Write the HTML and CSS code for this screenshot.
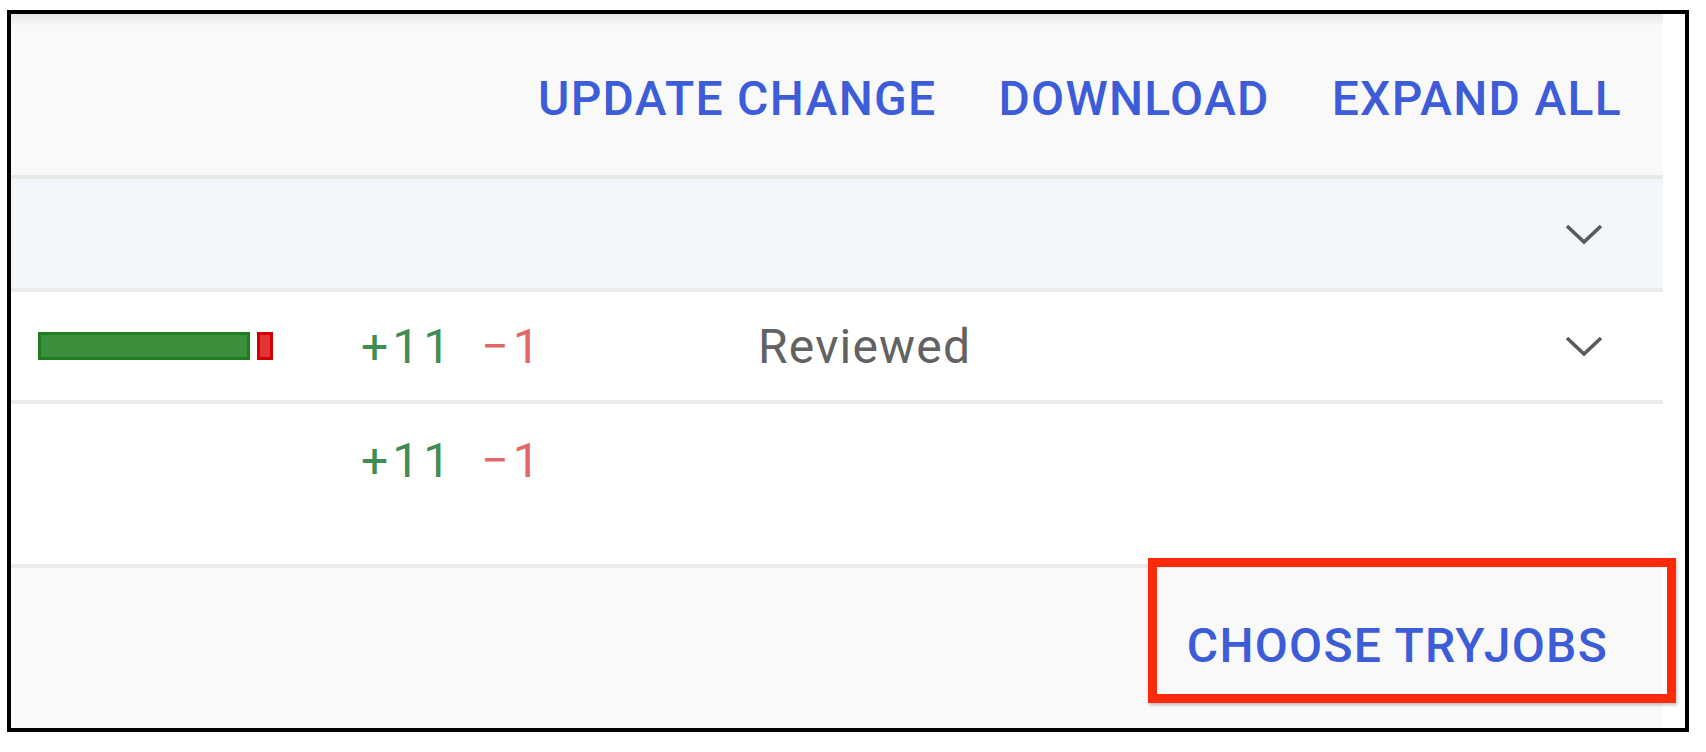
FILE: index.html
```html
<!DOCTYPE html>
<html lang="en">
<head>
<meta charset="utf-8">
<title>File list</title>
<link rel="stylesheet" href="styles.css">
</head>
<body>
<div class="frame">
  <div class="card">
    <div class="header">
      <span class="action">UPDATE CHANGE</span>
      <span class="action">DOWNLOAD</span>
      <span class="action">EXPAND ALL</span>
    </div>
    <div class="row row-selected">
      <div class="cell-bar"></div>
      <div class="cell-stats"></div>
      <div class="cell-status"></div>
      <div class="cell-toggle">
        <svg viewBox="0 0 40 24" width="40" height="24"><polyline points="3,4 20,20 37,4"/></svg>
      </div>
    </div>
    <div class="row row-file">
      <div class="cell-bar"><span class="bar-add"></span><span class="bar-del"></span></div>
      <div class="cell-stats"><span class="added">+11</span><span class="removed">−1</span></div>
      <div class="cell-status">Reviewed</div>
      <div class="cell-toggle">
        <svg viewBox="0 0 40 24" width="40" height="24"><polyline points="3,4 20,20 37,4"/></svg>
      </div>
    </div>
    <div class="row row-total">
      <div class="cell-bar"></div>
      <div class="cell-stats"><span class="added">+11</span><span class="removed">−1</span></div>
    </div>
    <div class="footer">
      <span class="action">CHOOSE TRYJOBS</span>
      <span class="highlight"></span>
    </div>
  </div>
</div>
</body>
</html>
```

FILE: styles.css
```css
* { box-sizing: border-box; }

body {
  margin: 0;
  background: #ffffff;
  font-family: Roboto, "Liberation Sans", sans-serif;
}

.frame {
  margin: 10px 0 0 7px;
  width: 1682px;
  height: 722px;
  border: 4px solid #000;
  display: flex;
  flex-direction: column;
  box-shadow: inset 1px 0 0 #b5b5b5;
}

.card {
  width: 1652px;
  flex: 1;
  display: flex;
  flex-direction: column;
}

.header {
  height: 165px;
  padding: 7px 41px 0 0;
  display: flex;
  justify-content: flex-end;
  align-items: center;
  gap: 62px;
  background: linear-gradient(#e7e7e7, #f9f9f9 12px);
  border-bottom: 4px solid #e8e8e8;
}

.action {
  font-size: 48px;
  font-weight: 500;
  letter-spacing: 1.3px;
  color: #3d5cd8;
  white-space: nowrap;
}

.row {
  display: flex;
  align-items: center;
  padding-left: 27px;
  border-bottom: 4px solid #ebebeb;
  font-size: 48px;
}

.row-selected {
  height: 113px;
  background: #f3f6fb;
}

.row-file {
  height: 112px;
  background: #fff;
}

.row-total {
  height: 164px;
  align-items: flex-start;
  padding-top: 28px;
  background: #fff;
}

.cell-bar {
  width: 323px;
  display: flex;
  align-items: center;
  gap: 7px;
}

.bar-add {
  width: 212px;
  height: 28px;
  background: #3c8f3c;
  border: 3px solid #1f7d1f;
}

.bar-del {
  width: 16px;
  height: 28px;
  background: #e23434;
  border: 3px solid #d00000;
}

.cell-stats {
  width: 397px;
  display: flex;
  gap: 27px;
  letter-spacing: 4px;
}

.added { color: #418c52; }
.removed { color: #e26868; }

.cell-status {
  flex: 1;
  color: #626262;
  letter-spacing: 1.2px;
}

.cell-toggle {
  width: 40px;
  height: 24px;
  margin-right: 59px;
  display: flex;
}

.cell-toggle svg {
  fill: none;
  stroke: #5a5a5a;
  stroke-width: 3.6;
}

.footer {
  flex: 1;
  position: relative;
  display: flex;
  justify-content: flex-end;
  align-items: center;
  padding: 0 55px 6px 0;
  background: #f9f9f9;
}

.highlight {
  position: absolute;
  top: -10px;
  right: -13px;
  width: 528px;
  height: 145px;
  border: 9px solid #fc2a08;
  box-shadow: 1px 2px 3px rgba(0, 0, 0, 0.25);
}
```
